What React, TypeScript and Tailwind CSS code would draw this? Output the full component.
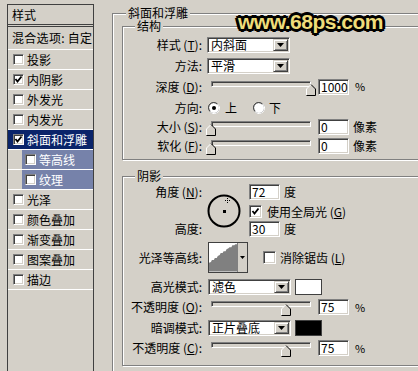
import { ReactNode } from 'react'

const sunken =
  'border border-t-[#808080] border-l-[#808080] border-b-white border-r-white shadow-[inset_1px_1px_0_#404040,inset_-1px_-1px_0_#d4d0c8]'

function Check({ checked = false, small = false }: { checked?: boolean; small?: boolean }) {
  return (
    <div
      className={`${small ? 'w-[11px] h-[11px]' : 'w-[13px] h-[13px]'} shrink-0 bg-white ${sunken} flex items-center justify-center`}
    >
      {checked && (
        <svg width="9" height="9" viewBox="0 0 9 9">
          <polyline points="1.5,4 3.5,6.5 7.5,1.5" fill="none" stroke="#000" strokeWidth="1.8" />
        </svg>
      )}
    </div>
  )
}

function Radio({ checked = false }: { checked?: boolean }) {
  return (
    <svg width="12" height="12" viewBox="0 0 12 12" className="shrink-0">
      <circle cx="6" cy="6" r="5.5" fill="#fff" stroke="#808080" />
      <path d="M10 2.2 A5.5 5.5 0 0 1 2.2 10" fill="none" stroke="#fff" />
      <path d="M2 9 A4.5 4.5 0 0 1 9 2" fill="none" stroke="#404040" />
      {checked && <circle cx="6" cy="6" r="2" fill="#000" />}
    </svg>
  )
}

function Arrow() {
  return (
    <svg width="7" height="4" viewBox="0 0 7 4">
      <path d="M0 0 H7 L3.5 4 Z" fill="#000" />
    </svg>
  )
}

function DropBtn() {
  return (
    <div className="w-[15px] h-full shrink-0 bg-[#d4d0c8] border border-t-[#d4d0c8] border-l-[#d4d0c8] border-b-[#404040] border-r-[#404040] shadow-[inset_1px_1px_0_#fff,inset_-1px_-1px_0_#808080] flex items-center justify-center">
      <Arrow />
    </div>
  )
}

function Select({ value }: { value: string }) {
  return (
    <div className={`w-[83px] h-[16px] shrink-0 flex bg-white ${sunken} p-[1px]`}>
      <span className="flex-1 pl-[2px] text-[12px] leading-[12px]">{value}</span>
      <DropBtn />
    </div>
  )
}

function Field({ value }: { value: string }) {
  return (
    <div className={`w-[31px] h-[16px] shrink-0 bg-white ${sunken} pl-[2px] text-[12px] leading-[14px]`}>
      {value}
    </div>
  )
}

function Slider({ pct }: { pct: number }) {
  return (
    <div className="relative w-[106px] h-[16px] shrink-0">
      <div className={`ml-[4px] mt-[4px] w-[100px] h-[6px] bg-[#d4d0c8] ${sunken}`} />
      <svg
        width="10"
        height="12"
        viewBox="0 0 10 12"
        className="absolute top-[3px]"
        style={{ left: pct - 1.5 }}
      >
        <path d="M5 0.5 L9.5 5 V11.5 H0.5 V5 Z" fill="#d4d0c8" />
        <path d="M0.5 11 V5 L5 0.5" fill="none" stroke="#fff" />
        <path d="M5 0.5 L9.5 5 V11.5 H0.5" fill="none" stroke="#000" />
      </svg>
    </div>
  )
}

function Label({ children }: { children: ReactNode }) {
  return (
    <div className="w-[79px] h-[16px] shrink-0 text-right text-[12px] leading-[16px] whitespace-nowrap">
      {children}
    </div>
  )
}

function Key({ k }: { k: string }) {
  return (
    <span className="text-[12px]">
      {' ('}
      <u>{k}</u>
      {')'}
    </span>
  )
}

const items = [
  { label: '投影' },
  { label: '内阴影', checked: true },
  { label: '外发光' },
  { label: '内发光' },
  { label: '斜面和浮雕', checked: true, selected: true },
  { label: '等高线', sub: true },
  { label: '纹理', sub: true },
  { label: '光泽' },
  { label: '颜色叠加' },
  { label: '渐变叠加' },
  { label: '图案叠加' },
  { label: '描边' },
]

function StylesList() {
  return (
    <div className="ml-[7px] mt-[4px] w-[87px] h-[380px] shrink-0 border border-[#404040] text-[12px]">
      <div className="h-[22px] pl-[4px] flex items-center border-b-[3px] border-double border-[#404040]">样式</div>
      <div className="h-[23px] pl-[4px] flex items-center border-b border-white whitespace-nowrap tracking-[0.3px]">
        混合选项: 自定
      </div>
      {items.map((it) => (
        <div key={it.label} className={`h-[20px] flex border-b border-white ${it.sub ? 'pl-[14px]' : ''}`}>
          <div
            className={`flex-1 flex items-center gap-[3px] ${it.sub ? 'pl-[3px] bg-[#7682aa] text-white' : 'pl-[5px]'} ${
              it.selected ? 'bg-[#0a246a] text-white' : ''
            }`}
          >
            <Check small checked={it.checked} />
            <span className="whitespace-nowrap">{it.label}</span>
          </div>
        </div>
      ))}
    </div>
  )
}

const group =
  'border border-[#808080] shadow-[inset_1px_1px_0_#fff,1px_1px_0_#fff] shrink-0'
const legend = 'px-[2px] text-[12px] leading-[12px] bg-[#d4d0c8]'

function AngleDial() {
  return (
    <svg width="34" height="34" viewBox="0 0 34 34" className="shrink-0 ml-[5px] self-center">
      <circle cx="17" cy="17" r="15.5" fill="none" stroke="#000" strokeWidth="2" />
      <rect x="16" y="16" width="3" height="3" fill="#000" />
      <path d="M20.5 4 V9 M18 6.5 H23" stroke="#000" strokeWidth="1" strokeDasharray="1 1" />
    </svg>
  )
}

function ContourPicker() {
  return (
    <div className="ml-[6px] w-[40px] h-[31px] shrink-0 flex border border-[#404040] bg-white">
      <svg width="29" height="29" viewBox="0 0 29 29">
        <path
          d="M0 29 V20 L2 19 L3 17 L5 17 L6 15 L8 15 L9 13 L11 12 L12 10 L14 10 L15 8 L17 8 L18 6 L20 5 L21 4 L23 4 L24 2 L26 2 L27 1 L29 1 V29 Z"
          fill="#808080"
        />
      </svg>
      <div className="w-[10px] h-full ml-auto bg-[#d4d0c8] border-l border-[#808080] flex items-center justify-center">
        <svg width="5" height="3" viewBox="0 0 5 3">
          <path d="M0 0 H5 L2.5 3 Z" fill="#000" />
        </svg>
      </div>
    </div>
  )
}

export default function App() {
  return (
    <div className="relative w-[418px] h-[371px] overflow-hidden bg-[#d4d0c8] text-black font-['Noto_Sans_CJK_SC','Noto_Sans',sans-serif] flex">
      <StylesList />

      <fieldset className={`ml-[18px] mt-[7px] w-[330px] h-[400px] pl-[9px] ${group}`}>
        <legend className={`ml-[4px] ${legend}`}>斜面和浮雕</legend>

        <fieldset className={`mt-[1px] w-[310px] pb-[4px] pt-[2px] ${group}`}>
          <legend className={`ml-[12px] ${legend}`}>结构</legend>
          <div className="h-[21px] flex items-center">
            <Label>样式<Key k="T" />:</Label>
            <div className="ml-[5px]"><Select value="内斜面" /></div>
          </div>
          <div className="h-[21px] flex items-center">
            <Label>方法:</Label>
            <div className="ml-[5px]"><Select value="平滑" /></div>
          </div>
          <div className="h-[21px] flex items-center">
            <Label>深度<Key k="D" />:</Label>
            <div className="ml-[5px]"><Slider pct={100} /></div>
            <div className="ml-[5px]"><Field value="1000" /></div>
            <span className="ml-[6px] text-[11px]">%</span>
          </div>
          <div className="h-[21px] flex items-center text-[12px]">
            <Label>方向:</Label>
            <div className="ml-[6px] flex items-center"><Radio checked /></div>
            <span className="ml-[5px]">上</span>
            <div className="ml-[16px] flex items-center"><Radio /></div>
            <span className="ml-[4px]">下</span>
          </div>
          <div className="h-[18px] flex items-center">
            <Label>大小<Key k="S" />:</Label>
            <div className="ml-[5px]"><Slider pct={0} /></div>
            <div className="ml-[5px]"><Field value="0" /></div>
            <span className="ml-[4px] text-[12px]">像素</span>
          </div>
          <div className="h-[19px] flex items-center">
            <Label>软化<Key k="F" />:</Label>
            <div className="ml-[5px]"><Slider pct={0} /></div>
            <div className="ml-[5px]"><Field value="0" /></div>
            <span className="ml-[4px] text-[12px]">像素</span>
          </div>
        </fieldset>

        <fieldset className={`mt-[10px] w-[310px] h-[196px] pt-[2px] ${group}`}>
          <legend className={`ml-[12px] ${legend}`}>阴影</legend>

          <div className="h-[53px] flex">
            <div className="flex flex-col justify-between">
              <Label>角度<Key k="N" />:</Label>
              <Label>高度:</Label>
            </div>
            <AngleDial />
            <div className="ml-[8px] flex flex-col text-[12px]">
              <div className="h-[16px] flex items-center">
                <Field value="72" />
                <span className="ml-[4px]">度</span>
              </div>
              <div className="mt-[5px] h-[13px] flex items-center">
                <Check checked />
                <span className="ml-[5px] whitespace-nowrap">使用全局光<Key k="G" /></span>
              </div>
              <div className="mt-[3px] h-[16px] flex items-center">
                <Field value="30" />
                <span className="ml-[4px]">度</span>
              </div>
            </div>
          </div>

          <div className="mt-[5px] h-[31px] flex items-center">
            <Label>光泽等高线:</Label>
            <ContourPicker />
            <div className="ml-[15px]"><Check /></div>
            <span className="ml-[4px] text-[12px] whitespace-nowrap">消除锯齿<Key k="L" /></span>
          </div>

          <div className="mt-[4px] h-[20px] flex items-center">
            <Label>高光模式:</Label>
            <div className="ml-[6px]"><Select value="滤色" /></div>
            <div className="ml-[4px] w-[27px] h-[16px] bg-white border border-[#404040]" />
          </div>
          <div className="h-[20px] flex items-center">
            <Label>不透明度<Key k="O" />:</Label>
            <div className="ml-[5px]"><Slider pct={75} /></div>
            <div className="ml-[5px]"><Field value="75" /></div>
            <span className="ml-[6px] text-[11px]">%</span>
          </div>
          <div className="h-[21px] flex items-center">
            <Label>暗调模式:</Label>
            <div className="ml-[6px]"><Select value="正片叠底" /></div>
            <div className="ml-[4px] w-[27px] h-[16px] bg-black border border-[#404040]" />
          </div>
          <div className="h-[20px] flex items-center">
            <Label>不透明度<Key k="C" />:</Label>
            <div className="ml-[5px]"><Slider pct={75} /></div>
            <div className="ml-[5px]"><Field value="75" /></div>
            <span className="ml-[6px] text-[11px]">%</span>
          </div>
        </fieldset>
      </fieldset>

      <div className="absolute left-[238px] top-[11px] text-[21px] font-bold leading-none tracking-[-0.5px] text-[#eedc7a] font-['Liberation_Sans',sans-serif] [text-shadow:2px_0_#000,-2px_0_#000,0_2px_#000,0_-2px_#000,2px_2px_#000,-2px_-2px_#000,2px_-2px_#000,-2px_2px_#000,3px_0_#000,-3px_0_#000,0_3px_#000,0_-3px_#000]">
        www.68ps.com
      </div>
    </div>
  )
}
